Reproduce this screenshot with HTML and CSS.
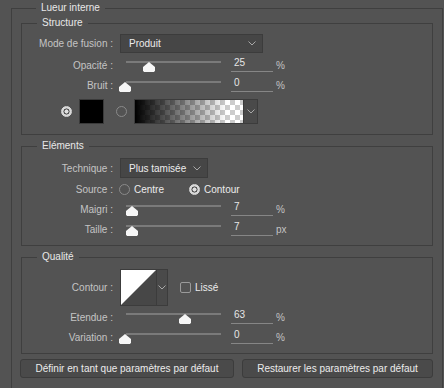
FILE: index.html
```html
<!DOCTYPE html>
<html lang="fr">
<head>
    <meta charset="UTF-8">
    <title>Lueur interne</title>
    <link rel="stylesheet" href="styles.css">
</head>
<body>
    <fieldset class="group outer">
        <legend>Lueur interne</legend>

        <fieldset class="group structure">
            <legend>Structure</legend>
            <div class="row row-select">
                <span class="label">Mode de fusion :</span>
                <div class="select select-mode">
                    <span class="select-text">Produit</span>
                    <svg class="chevron" width="8" height="5" viewBox="0 0 8 5"><path d="M0.5 0.5 L4 4 L7.5 0.5" fill="none" stroke="#a8a8a8" stroke-width="1"/></svg>
                </div>
            </div>
            <div class="row row-slider">
                <span class="label">Opacité :</span>
                <div class="slider"><span class="thumb" style="left:17px"></span></div>
                <span class="value">25</span>
                <span class="unit">%</span>
            </div>
            <div class="row row-slider">
                <span class="label">Bruit :</span>
                <div class="slider"><span class="thumb" style="left:-7px"></span></div>
                <span class="value">0</span>
                <span class="unit">%</span>
            </div>
            <div class="row row-color">
                <span class="radio checked"></span>
                <span class="swatch"></span>
                <span class="radio"></span>
                <div class="gradient-picker">
                    <span class="gradient"></span>
                    <span class="drop">
                        <svg class="chevron" width="8" height="5" viewBox="0 0 8 5"><path d="M0.5 0.5 L4 4 L7.5 0.5" fill="none" stroke="#a8a8a8" stroke-width="1"/></svg>
                    </span>
                </div>
            </div>
        </fieldset>

        <fieldset class="group elements">
            <legend>Eléments</legend>
            <div class="row row-select">
                <span class="label">Technique :</span>
                <div class="select select-tech">
                    <span class="select-text">Plus tamisée</span>
                    <svg class="chevron" width="8" height="5" viewBox="0 0 8 5"><path d="M0.5 0.5 L4 4 L7.5 0.5" fill="none" stroke="#a8a8a8" stroke-width="1"/></svg>
                </div>
            </div>
            <div class="row row-slider row-source">
                <span class="label">Source :</span>
                <span class="radio small-gap"></span>
                <span class="option">Centre</span>
                <span class="radio checked option-gap"></span>
                <span class="option">Contour</span>
            </div>
            <div class="row row-slider">
                <span class="label">Maigri :</span>
                <div class="slider"><span class="thumb" style="left:0px"></span></div>
                <span class="value">7</span>
                <span class="unit">%</span>
            </div>
            <div class="row row-slider">
                <span class="label">Taille :</span>
                <div class="slider"><span class="thumb" style="left:0px"></span></div>
                <span class="value">7</span>
                <span class="unit">px</span>
            </div>
        </fieldset>

        <fieldset class="group qualite">
            <legend>Qualité</legend>
            <div class="row row-contour">
                <span class="label">Contour :</span>
                <div class="contour-picker">
                    <svg class="contour" width="35" height="35" viewBox="0 0 35 35"><rect width="35" height="35" fill="#474747"/><path d="M0 0 H35 L0 35 Z" fill="#ffffff"/></svg>
                    <span class="drop">
                        <svg class="chevron" width="8" height="5" viewBox="0 0 8 5"><path d="M0.5 0.5 L4 4 L7.5 0.5" fill="none" stroke="#a8a8a8" stroke-width="1"/></svg>
                    </span>
                </div>
                <span class="checkbox"></span>
                <span class="option">Lissé</span>
            </div>
            <div class="row row-slider">
                <span class="label">Etendue :</span>
                <div class="slider"><span class="thumb" style="left:53px"></span></div>
                <span class="value">63</span>
                <span class="unit">%</span>
            </div>
            <div class="row row-slider">
                <span class="label">Variation :</span>
                <div class="slider"><span class="thumb" style="left:-7px"></span></div>
                <span class="value">0</span>
                <span class="unit">%</span>
            </div>
        </fieldset>

        <div class="buttons">
            <button class="btn btn-left">Définir en tant que paramètres par défaut</button>
            <button class="btn btn-right">Restaurer les paramètres par défaut</button>
        </div>
    </fieldset>
</body>
</html>
```

FILE: styles.css
```css
* {
    box-sizing: border-box;
}
body {
    margin: 0;
    background: #535353;
    font-family: "Liberation Sans", Arial, sans-serif;
    font-size: 10px;
    color: #c4c4c4;
    overflow: hidden;
}
.group {
    border: 1px solid #3f3f3f;
    margin: 0;
    padding: 0;
    min-width: 0;
}
.group legend {
    margin-left: 15px;
    padding: 0 5px;
    line-height: 16px;
    color: #e8e8e8;
}
.outer {
    width: 432px;
    margin: 0 0 0 11px;
    padding: 0 9px 20px 9px;
    border-bottom: none;
}
.structure {
    margin-top: -1px;
    padding-bottom: 10px;
}
.elements {
    margin-top: 3px;
    padding-bottom: 6px;
}
.qualite {
    margin-top: 3px;
    padding-bottom: 6px;
}
.row {
    display: flex;
    align-items: center;
}
.label {
    width: 91px;
    flex: none;
    text-align: right;
}
.row-select {
    height: 19px;
    margin-top: 3px;
}
.elements .row-select {
    height: 20px;
    margin-top: 4px;
}
.row-slider {
    height: 20px;
}
.structure .row-select + .row-slider {
    margin-top: 2px;
}
.row-source {
    margin-top: 1px;
}
.select {
    margin-left: 7px;
    height: 100%;
    border: 1px solid #3c3c3c;
    background: #464646;
    display: flex;
    align-items: center;
    justify-content: space-between;
    padding: 0 6px 0 8px;
    color: #ececec;
}
.select-mode {
    width: 143px;
}
.select-tech {
    width: 88px;
}
.slider {
    position: relative;
    width: 95px;
    height: 20px;
    margin-left: 13px;
    align-self: flex-start;
}
.slider::before {
    content: "";
    position: absolute;
    left: 0;
    right: 0;
    top: 6px;
    height: 2px;
    background: #7a7a7a;
}
.thumb {
    position: absolute;
    top: 7px;
    width: 12px;
    height: 10px;
    background: #f6f6f6;
    clip-path: polygon(50% 0, 100% 50%, 100% 85%, 92% 100%, 8% 100%, 0 85%, 0 50%);
}
.value {
    margin-left: 10px;
    width: 42px;
    padding-left: 3px;
    height: 16px;
    line-height: 14px;
    border-bottom: 1px solid #868686;
    color: #e6e6e6;
    align-self: flex-start;
    margin-top: 1px;
}
.unit {
    margin-left: 3px;
}
.row-color {
    height: 25px;
    margin-top: 4px;
}
.radio {
    width: 11px;
    height: 11px;
    border: 1px solid #8a8a8a;
    border-radius: 50%;
    flex: none;
}
.radio.checked {
    border-color: #dadada;
    background: radial-gradient(circle, #e0e0e0 0 1.8px, #4e4e4e 2.3px 2.8px, #dadada 3.3px);
}
.row-color .radio:first-child {
    margin-left: 39px;
}
.swatch {
    width: 25px;
    height: 25px;
    margin: 0 12px 0 7px;
    background: #000;
    border: 1px solid #3a3a3a;
}
.gradient-picker {
    display: flex;
    margin-left: 7px;
    height: 25px;
    border: 1px solid #3c3c3c;
}
.gradient {
    width: 108px;
    background:
        linear-gradient(to right, #000, rgba(0,0,0,0) 85%),
        repeating-conic-gradient(#cccccc 0 25%, #ffffff 0 50%) 0 0 / 10px 10px;
}
.drop {
    width: 14px;
    display: flex;
    align-items: center;
    justify-content: center;
    border-left: 1px solid #3c3c3c;
    background: #4a4a4a;
}
.small-gap {
    margin-left: 6px;
}
.option {
    margin-left: 4px;
    color: #ececec;
}
.option-gap {
    margin-left: 25px;
}
.row-contour {
    height: 37px;
    margin-top: 4px;
}
.contour-picker {
    display: flex;
    margin-left: 7px;
    border: 1px solid #3c3c3c;
}
.contour {
    display: block;
}
.contour-picker .drop {
    width: 11px;
}
.checkbox {
    width: 11px;
    height: 11px;
    border: 1px solid #9a9a9a;
    border-radius: 2px;
    margin-left: 12px;
}
.row-contour + .row-slider {
    margin-top: 1px;
}
.buttons {
    display: flex;
    gap: 8px;
    margin: 5px 0 0 -1px;
}
.btn {
    height: 19px;
    margin: 0;
    padding: 0;
    border: 1px solid #3c3c3c;
    border-radius: 3px;
    background: #4a4a4a;
    color: #ececec;
    font: inherit;
    line-height: 16px;
}
.btn-left {
    width: 214px;
}
.btn-right {
    width: 191px;
}
```
